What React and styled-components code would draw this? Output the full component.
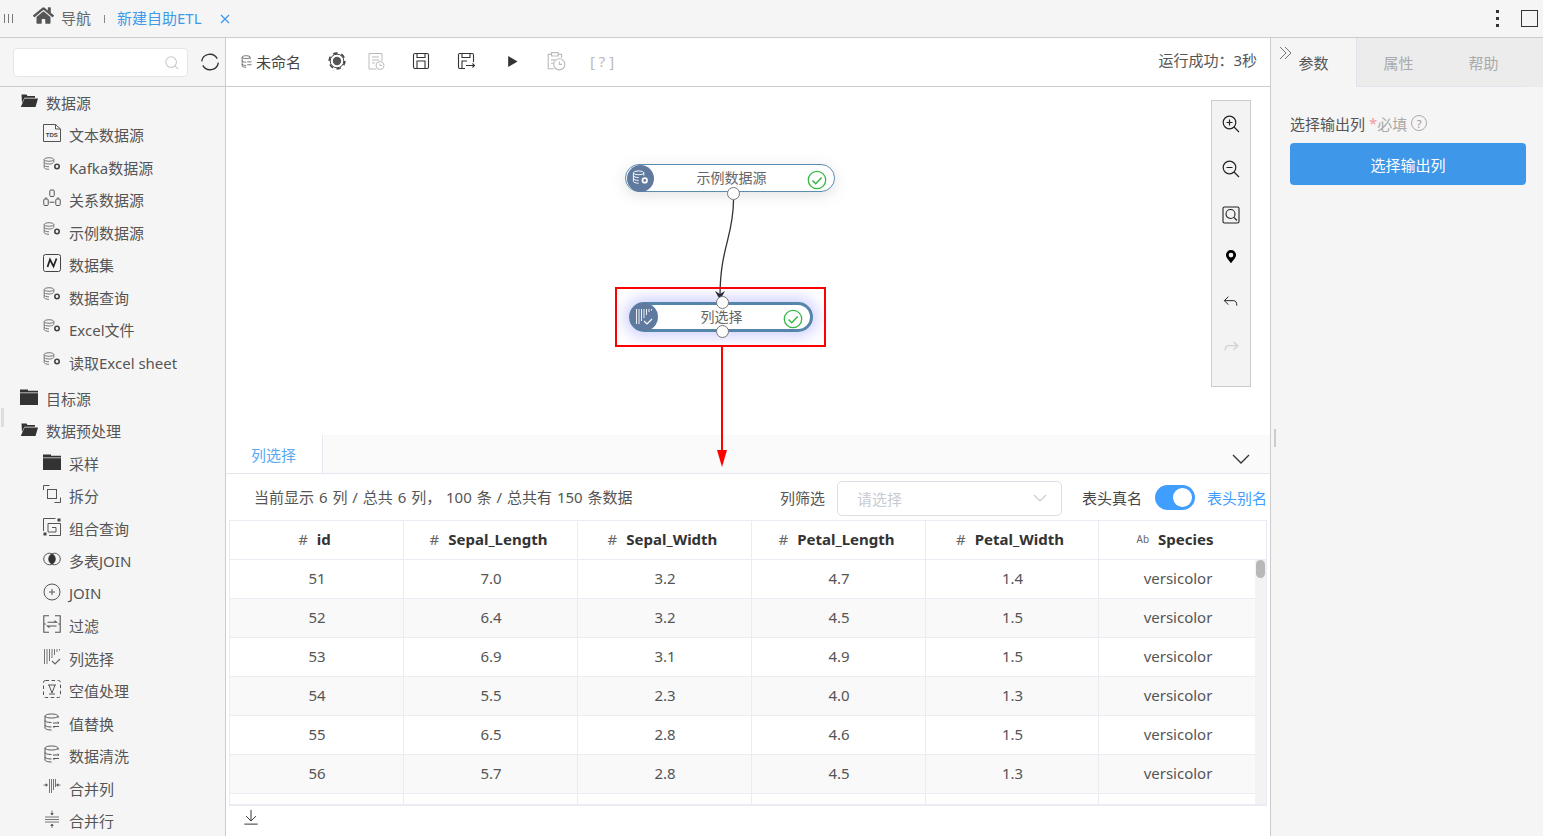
import React from "react";
import styled, { createGlobalStyle } from "styled-components";
import { FaHome } from "react-icons/fa";

const Svg = ({ size = 18, children, color = "#555", sw = 1, ...rest }) => (
  <svg width={size} height={size} viewBox="0 0 18 18" fill="none" stroke={color} strokeWidth={sw} {...rest}>
    {children}
  </svg>
);

const FolderOpen = () => (
  <Svg><path d="M1.5 2.500h5l1 1.500h7.500V5.800H4.500L2 11z" fill="#333" stroke="none" /><path d="M4.500 6.500H18L15.500 15H.8z" fill="#333" stroke="none" /></Svg>
);
const FolderShut = () => (
  <Svg><path d="M0 1.500h8v1.200h10v1.800H0z" fill="#333" stroke="none" /><path d="M0 5.200h18V17H0z" fill="#333" stroke="none" /></Svg>
);
const TdsFile = () => (
  <Svg>
    <path d="M.5.500h12l5 4.500v12.500H.5z M12.500.500v4.500h5" />
    <text x="8.800" y="12.500" fontSize="6" fontFamily="Liberation Sans" fontWeight="700" fill="#444" stroke="none" textAnchor="middle">TDS</text>
  </Svg>
);
const DbGear = () => (
  <Svg color="#777">
    <ellipse cx="6" cy="2.500" rx="4.800" ry="1.800" />
    <path d="M1.200 2.500v8c0 1 2 1.800 4.800 1.800 M1.200 5.200c0 1 2 1.800 4.800 1.800s3.500-.5 4.500-1.300 M1.200 8c0 1 2 1.800 4.800 1.800 M10.800 2.500v3" />
    <circle cx="14" cy="9.500" r="2.200" stroke="#444" strokeWidth="1.600" />
  </Svg>
);
const Relation = () => (
  <Svg color="#555">
    <rect x="6.800" y="1" width="4.400" height="6.500" rx="1" />
    <rect x=".8" y="10" width="4.400" height="6.500" rx="1" />
    <rect x="12.800" y="10" width="4.400" height="6.500" rx="1" />
    <path d="M3 10V8.200M15 10V8.200M6.500 13.200h5" />
  </Svg>
);
const DatasetN = () => (
  <Svg color="#444">
    <rect x=".5" y=".5" width="17" height="17" rx="2" />
    <path d="M4.500 13L7 5.500l3.500 7L13.500 4.500" stroke="#222" strokeWidth="1.700" />
  </Svg>
);
const Split = () => (
  <Svg>
    <path d="M.5 5V.5h6M17.500 12.500v5h-6" />
    <rect x="4.500" y="4.500" width="9" height="9" />
  </Svg>
);
const Combine = () => (
  <Svg>
    <path d="M.5 13V.5h12M5 5.500h12.500V17.500H6" />
    <path d="M5 5.500v8.500h8V9.500H9" />
    <rect x="14.500" y=".5" width="3" height="3" fill="#444" stroke="none" />
    <rect x=".5" y="14.500" width="3" height="3" fill="#444" stroke="none" />
  </Svg>
);
const Venn = () => (
  <Svg>
    <circle cx="6.500" cy="9" r="5.800" />
    <circle cx="11.500" cy="9" r="5.800" />
    <path d="M9 3.800a5.800 5.800 0 0 1 0 10.400a5.800 5.800 0 0 1 0-10.400z" fill="#333" stroke="none" />
  </Svg>
);
const JoinIcon = () => (
  <Svg>
    <circle cx="9" cy="9" r="8" />
    <path d="M9 6v6M6 9h6" />
  </Svg>
);
const FilterIcon = () => (
  <Svg sw={1.100}>
    <path d="M6 .8H.8v16.400H6M12 .8h5.200v16.400H12M.8 9h2M15.200 9h2" />
    <path d="M4.500 7.200h9l-2-1.500M13.500 11h-9l2 1.500" />
  </Svg>
);
const ColSelect = ({ color = "#666" }) => (
  <Svg color={color} sw={0.9}>
    <path d="M1.500 1v15M4 1v15M6.500 1v12M9 1v9M11.500 1v6M14 1v3M16.500 1v1.500" />
    <path d="M9 13l3 3 5-5" stroke={color} strokeWidth="1.200" />
  </Svg>
);
const NullIcon = () => (
  <Svg>
    <rect x=".5" y=".5" width="17" height="17" rx="2" strokeDasharray="3.500 2.500" />
    <path d="M5 5h8M6 5l3 8 3-8" />
    <path d="M6 14h6" />
  </Svg>
);
const DbSwap = () => (
  <Svg>
    <path d="M15 5V3c0-1-2.500-2-6.500-2S2 2 2 3v12c0 1 2.500 2 6.500 2M2 3c0 1 2.500 2 6.500 2S15 4 15 3M2 7.500c0 1 2.500 2 6.500 2M2 12c0 1 2.500 2 6.500 2" />
    <path d="M10 10h6l-1.500-1.200M16 13.500h-6l1.500 1.200" />
  </Svg>
);
const MergeCol = () => (
  <Svg color="#555" sw={0.8}>
    <path d="M6.500 1v14M8.500 1v14M10.500 1v11M12.500 1v8" />
    <path d="M.5 7h3M17.500 7h-3" />
    <path d="M3 5.800L4.500 7 3 8.200zM15 5.800L13.500 7 15 8.200z" fill="#444" />
  </Svg>
);
const MergeRow = () => (
  <Svg color="#555" sw={0.8}>
    <path d="M2 7h14M2 9.500h14M2 12h14" />
    <path d="M9 .5v4M9 14.500v3.500" />
    <path d="M7.800 3.500L9 5 10.200 3.500zM7.800 15.500L9 14 10.200 15.500z" fill="#444" />
  </Svg>
);

const sidebarGroups = [
  {
    name: "数据源", open: true,
    items: [
      ["文本数据源", TdsFile], ["Kafka数据源", DbGear], ["关系数据源", Relation], ["示例数据源", DbGear],
      ["数据集", DatasetN], ["数据查询", DbGear], ["Excel文件", DbGear], ["读取Excel sheet", DbGear],
    ],
  },
  { name: "目标源", open: false, items: [] },
  {
    name: "数据预处理", open: true,
    items: [
      ["采样", FolderShut], ["拆分", Split], ["组合查询", Combine], ["多表JOIN", Venn], ["JOIN", JoinIcon],
      ["过滤", FilterIcon], ["列选择", ColSelect], ["空值处理", NullIcon], ["值替换", DbSwap],
      ["数据清洗", DbSwap], ["合并列", MergeCol], ["合并行", MergeRow],
    ],
  },
];

const columns = [
  { tag: "#", name: "id" },
  { tag: "#", name: "Sepal_Length" },
  { tag: "#", name: "Sepal_Width" },
  { tag: "#", name: "Petal_Length" },
  { tag: "#", name: "Petal_Width" },
  { tag: "Ab", name: "Species" },
];

// the last row only shows its top edge above the fold
const rows = [
  ["51", "7.0", "3.2", "4.7", "1.4", "versicolor"],
  ["52", "6.4", "3.2", "4.5", "1.5", "versicolor"],
  ["53", "6.9", "3.1", "4.9", "1.5", "versicolor"],
  ["54", "5.5", "2.3", "4.0", "1.3", "versicolor"],
  ["55", "6.5", "2.8", "4.6", "1.5", "versicolor"],
  ["56", "5.7", "2.8", "4.5", "1.3", "versicolor"],
  ["", "", "", "", "", ""],
];

const CheckBadge = () => (
  <Badge width="20" height="20" viewBox="0 0 20 20">
    <circle cx="10" cy="10" r="8.700" />
    <path d="M5.500 10.500l3.200 3.200 6-6.200" strokeWidth="1.500" />
  </Badge>
);

export default function App() {
  return (
    <Page>
      <GlobalStyle />
      <TopBar>
        <Grip />
        <HomeLink><FaHome size={21} color="#555" /></HomeLink>
        <NavText>导航</NavText>
        <NavSep />
        <ActiveTab>新建自助ETL</ActiveTab>
        <CloseMark viewBox="0 0 10 10"><path d="M1 1l8 8M9 1l-8 8" /></CloseMark>
        <TopRight>
          <Dots><i /><i /><i /></Dots>
          <MaxBox />
        </TopRight>
      </TopBar>

      <Main>
        <Sidebar>
          <SearchRow>
            <SearchBox>
              <Svg size={16} color="#c4c8cc" sw={1.200}><circle cx="8" cy="8" r="6" /><path d="M12.500 12.500l3.500 3.500" /></Svg>
            </SearchBox>
            <Svg size={20} color="#333" sw={1.200}>
              <path d="M1.500 8.500a7.500 7.500 0 0 1 14-2.500M16.500 9.500a7.500 7.500 0 0 1-14 2.500" />
            </Svg>
          </SearchRow>
          <Tree>
            {sidebarGroups.map(group => (
              <React.Fragment key={group.name}>
                <GroupRow $closed={!group.open}>
                  <IconSlot>{group.open ? <FolderOpen /> : <FolderShut />}</IconSlot>
                  {group.name}
                </GroupRow>
                {group.items.map(([label, Icon]) => (
                  <ItemRow key={label}>
                    <IconSlot $up><Icon /></IconSlot>
                    {label}
                  </ItemRow>
                ))}
              </React.Fragment>
            ))}
          </Tree>
          <SideHandle />
        </Sidebar>

        <Center>
          <Toolbar>
            <FileName>
              <Svg size={13} color="#444"><path d="M14 6V3c0-1-2-2-5.500-2S3 2 3 3v12c0 1 2 2 5.500 2M3 3c0 1 2 2 5.500 2S14 4 14 3M3 8c0 1 2 2 5.500 2M3 12.500c0 1 2 2 5.500 2M10 9.500h6M16 13.500h-6" /></Svg>
              未命名
            </FileName>
            <ToolSlot $x={27}>
              <Svg color="#444">
                <circle cx="9" cy="9" r="7.900" strokeWidth="1.600" strokeDasharray="4.500 3.770" />
                <circle cx="9" cy="9" r="6.800" />
                <circle cx="9" cy="9" r="4.200" fill="#555" stroke="none" />
              </Svg>
            </ToolSlot>
            <ToolSlot $x={21}>
              <Svg color="#bbb"><path d="M9 17H2V1.500h13V9M5 5h7M5 8h7M5 11h3" /><circle cx="13" cy="13.500" r="4" /><path d="M13 11.500v2h2" /></Svg>
            </ToolSlot>
            <ToolSlot $x={27}>
              <Svg color="#333" sw={1.100}><rect x="1.500" y="1.500" width="15" height="15" rx="1.500" /><path d="M5 1.500v4h8v-4M5 16.500V9h8v7.500" /></Svg>
            </ToolSlot>
            <ToolSlot $x={27}>
              <Svg color="#333" sw={1.100}><path d="M16.500 10V3c0-1-.500-1.500-1.500-1.500H3c-1 0-1.500.500-1.500 1.500v12c0 1 .500 1.500 1.500 1.500h5M5 1.500v4h8v-4M5 16V9h5M9 13.500h8.500M15.500 11.500l2 2-2 2" /></Svg>
            </ToolSlot>
            <ToolSlot $x={31}>
              <Svg size={13} color="#333"><path d="M3 1.500v15L16 9z" fill="#333" stroke="none" /></Svg>
            </ToolSlot>
            <ToolSlot $x={27}>
              <Svg size={20} color="#bbb"><path d="M7 16H2V3h3M11 3h3v3M5 1.500h6v3H5zM4.500 8H8M4.500 11H7" /><circle cx="12" cy="12" r="5" /><path d="M12 9.500V12h2.500" /></Svg>
            </ToolSlot>
            <HelpTag>[ ? ]</HelpTag>
            <RunStatus>运行成功：3秒</RunStatus>
          </Toolbar>

          <Canvas>
            <EdgeLayer>
              <path d="M 107.500 113 C 107.500 150, 94 160, 94 210" />
            </EdgeLayer>
            <SourceNode>
              <NodeIcon><Svg size={17} color="#fff"><ellipse cx="7" cy="3" rx="5.500" ry="2" /><path d="M1.500 3v9c0 1 2.500 2 5.500 2M1.500 6c0 1 2.500 2 5.500 2M1.500 9c0 1 2.500 2 5.500 2M12.500 3v3" /><circle cx="13.500" cy="11" r="2.400" strokeWidth="1.800" /></Svg></NodeIcon>
              <NodeLabel>示例数据源</NodeLabel>
              <CheckBadge />
              <Port $side="bottom" $dx={101} />
            </SourceNode>
            <ArrowHead viewBox="0 0 10 10"><path d="M0 1l5 3 5-3-5 9z" /></ArrowHead>
            <SelectionBox />
            <SelectedNode>
              <NodeIcon $big><ColSelect color="#fff" /></NodeIcon>
              <NodeLabel>列选择</NodeLabel>
              <CheckBadge />
              <Port $side="top" $dx={84} />
              <Port $side="bottom" $dx={84} />
            </SelectedNode>
            <RedArrow width="14" height="122" viewBox="0 0 14 122">
              <path d="M7 0v110" stroke="#f00" strokeWidth="2" fill="none" />
              <path d="M2 103h10l-5 17z" fill="#f00" />
            </RedArrow>
            <ZoomPane>
              <ZoomTool $h={46}>
                <Svg color="#222" sw={1.200}><circle cx="7.500" cy="7.500" r="6.300" /><path d="M12 12l5 5M7.500 4.500v6M4.500 7.500h6" /></Svg>
              </ZoomTool>
              <ZoomTool $h={44}>
                <Svg color="#222" sw={1.200}><circle cx="7.500" cy="7.500" r="6.300" /><path d="M12 12l5 5M4.500 7.500h6" /></Svg>
              </ZoomTool>
              <ZoomTool $h={48}>
                <Svg color="#222" sw={1.100}><rect x="1" y="1" width="16" height="16" rx="1.500" /><circle cx="8.500" cy="8" r="4.500" /><path d="M12 11.500l3 3" /></Svg>
              </ZoomTool>
              <ZoomTool $h={36}>
                <Svg size={14} color="#000"><path d="M9 17C5 12 2.500 9.500 2.500 6.500a6.500 6.500 0 0 1 13 0C15.500 9.500 13 12 9 17z" fill="#000" stroke="none" /><circle cx="9" cy="6.500" r="3" fill="#f3f3f3" stroke="none" /></Svg>
              </ZoomTool>
              <ZoomTool $h={54}>
                <Svg size={16} color="#222" sw={1.100}><path d="M6 3L1.500 7.500 6 12M1.500 7.500H12c2.500 0 3.500 2 3.500 5.500" /></Svg>
              </ZoomTool>
              <ZoomTool $h={36}>
                <Svg size={16} color="#cfd2d8" sw={1.500}><path d="M12 3l4.500 4.500L12 12M16.500 7.500H6c-2.500 0-3.500 2-3.500 5.500" /></Svg>
              </ZoomTool>
            </ZoomPane>
          </Canvas>

          <DataPanel>
            <TabBar>
              <DataTab>列选择</DataTab>
              <Chevron width="20" height="12" viewBox="0 0 20 12"><path d="M2 2l8 8 8-8" /></Chevron>
            </TabBar>
            <InfoRow>
              <InfoText>当前显示 6 列 / 总共 6 列， 100 条 / 总共有 150 条数据</InfoText>
              <FilterLabel>列筛选</FilterLabel>
              <SelectBox>
                请选择
                <svg width="14" height="8" viewBox="0 0 14 8" fill="none" stroke="#c8ccd2" strokeWidth="1.200"><path d="M1 1l6 6 6-6" /></svg>
              </SelectBox>
              <ToggleLabel>表头真名</ToggleLabel>
              <Toggle><Knob /></Toggle>
              <AliasLabel>表头别名</AliasLabel>
            </InfoRow>
            <TableWrap>
              <HeadRow>
                {columns.map(col => (
                  <HeadCell key={col.name}>
                    <ColTag $small={col.tag === "Ab"}>{col.tag}</ColTag>
                    {col.name}
                  </HeadCell>
                ))}
              </HeadRow>
              <BodyWrap>
                <Rows>
                  {rows.map((row, index) => (
                    <BodyRow key={index} $shade={index % 2 === 1}>
                      {row.map((cell, i) => <BodyCell key={i}>{cell}</BodyCell>)}
                    </BodyRow>
                  ))}
                </Rows>
                <ScrollTrack><ScrollThumb /></ScrollTrack>
              </BodyWrap>
            </TableWrap>
            <BottomBar>
              <Svg size={16} color="#333" sw={1.100}><path d="M9 1v12M3.500 8L9 13.500 14.500 8M1.500 17h15" /></Svg>
            </BottomBar>
          </DataPanel>
        </Center>

        <RightPanel>
          <PaneHandle />
          <CollapseMark width="14" height="14" viewBox="0 0 14 14"><path d="M1 1l6 6-6 6M6 1l6 6-6 6" /></CollapseMark>
          <RightTabs>
            <RightTab $active>参数</RightTab>
            <RightTab>属性</RightTab>
            <RightTab>帮助</RightTab>
          </RightTabs>
          <RightBody>
            <FieldLabel>
              选择输出列 <Required>*</Required><Hint>必填</Hint>
              <HelpCircle>?</HelpCircle>
            </FieldLabel>
            <PrimaryButton>选择输出列</PrimaryButton>
          </RightBody>
        </RightPanel>
      </Main>
    </Page>
  );
}

const GlobalStyle = createGlobalStyle`
  html, body { margin: 0; padding: 0; height: 100%; overflow: hidden; }
  body { font-family: "Noto Sans", "Noto Sans CJK SC", sans-serif; font-size: 15px; color: #555; }
  * { box-sizing: border-box; }
`;

const Page = styled.div`
  height: 100vh;
  display: flex;
  flex-direction: column;
  background: #fff;
`;

const TopBar = styled.div`
  height: 38px;
  flex: none;
  display: flex;
  align-items: center;
  padding-left: 4px;
  background: #f5f5f5;
  border-bottom: 1px solid #ccc;
`;

const Grip = styled.div`
  width: 10px;
  height: 9px;
  margin-right: 19px;
  background: repeating-linear-gradient(90deg, #777 0 1px, transparent 1px 4px);
`;

const HomeLink = styled.span`
  display: flex;
  margin: -6px 7px 0 0;
`;

const NavText = styled.span`
  margin-top: -3px;
  color: #666;
`;

const NavSep = styled.span`
  width: 1px;
  height: 8px;
  margin: 0 13px;
  background: #888;
`;

const ActiveTab = styled.span`
  margin: -3px 0 0 -1px;
  color: #3d9be9;
`;

const CloseMark = styled.svg`
  width: 10px;
  height: 10px;
  margin-left: 18px;
  fill: none;
  stroke: #3d9be9;
  stroke-width: 1.300;
`;

const TopRight = styled.div`
  margin-left: auto;
  display: flex;
  align-items: center;
  padding-right: 5px;
`;

const Dots = styled.span`
  display: flex;
  flex-direction: column;
  gap: 4px;
  margin-right: 22px;
  i {
    width: 3px;
    height: 3px;
    background: #333;
  }
`;

const MaxBox = styled.span`
  width: 17px;
  height: 17px;
  border: 1px solid #333;
`;

const Main = styled.div`
  flex: 1;
  min-height: 0;
  display: flex;
`;

const Sidebar = styled.aside`
  width: 226px;
  flex: none;
  position: relative;
  background: #f5f5f5;
  border-right: 1px solid #ccc;
  overflow: hidden;
`;

const SearchRow = styled.div`
  height: 49px;
  display: flex;
  align-items: center;
  gap: 12px;
  padding-left: 13px;
  border-bottom: 1px solid #ccc;
`;

const SearchBox = styled.div`
  width: 175px;
  height: 29px;
  margin-top: 1px;
  display: flex;
  align-items: center;
  justify-content: flex-end;
  padding-right: 7px;
  background: #fff;
  border: 1px solid #e4e6ec;
  border-radius: 4px;
`;

const Tree = styled.div`
  margin-top: -1px;
  display: flex;
  flex-direction: column;
`;

const GroupRow = styled.div`
  height: 32.500px;
  flex: none;
  display: flex;
  align-items: center;
  gap: 8px;
  padding-left: 20px;
  margin-top: ${p => (p.$closed ? "3.500px" : "0")};
  color: #555;
`;

const ItemRow = styled(GroupRow)`
  padding-left: 43px;
`;

const IconSlot = styled.span`
  display: flex;
  width: 18px;
  height: 18px;
  margin-top: ${p => (p.$up ? "-3px" : "-2px")};
`;

const SideHandle = styled.div`
  position: absolute;
  left: 1px;
  top: 370px;
  width: 3px;
  height: 19px;
  background: #ddd;
`;

const Center = styled.main`
  flex: 1;
  min-width: 0;
  display: flex;
  flex-direction: column;
`;

const Toolbar = styled.div`
  height: 49px;
  flex: none;
  display: flex;
  align-items: center;
  padding: 0 13px 2px 14px;
  border-bottom: 1px solid #ccc;
`;

const FileName = styled.span`
  display: flex;
  align-items: center;
  gap: 3px;
  color: #444;
`;

const ToolSlot = styled.span`
  display: flex;
  margin-left: ${p => p.$x}px;
`;

const HelpTag = styled.span`
  margin-left: 24px;
  color: #bbb;
`;

const RunStatus = styled.span`
  margin: -3px 0 0 auto;
  color: #555;
`;

const Canvas = styled.div`
  height: 348px;
  flex: none;
  position: relative;
  z-index: 2;
  background: #fff;
`;

const EdgeLayer = styled.svg`
  position: absolute;
  left: 400px;
  top: 0;
  width: 300px;
  height: 220px;
  fill: none;
  stroke: #333;
  stroke-width: 1.300;
`;

const NodeBase = styled.div`
  position: absolute;
  display: flex;
  align-items: center;
  background: #fff;
  border-radius: 15px;
`;

const SourceNode = styled(NodeBase)`
  left: 399px;
  top: 77px;
  width: 210px;
  height: 28px;
  padding: 0 7px 0 1px;
  border: 1px solid #5b8db0;
  box-shadow: 0 3px 14px rgba(120, 120, 130, 0.220);
`;

const SelectedNode = styled(NodeBase)`
  left: 403px;
  top: 215px;
  width: 184px;
  height: 30px;
  padding: 0 7px 0 0;
  border: 3px solid #5585a8;
  box-shadow: 0 0 14px 5px rgba(110, 110, 255, 0.300);
`;

const NodeIcon = styled.span`
  width: ${p => (p.$big ? 28 : 27)}px;
  height: ${p => (p.$big ? 28 : 27)}px;
  flex: none;
  margin-left: ${p => (p.$big ? "-2px" : "0")};
  display: flex;
  align-items: center;
  justify-content: center;
  border-radius: 50%;
  background: #5f7a9e;
`;

const NodeLabel = styled.span`
  flex: 1;
  margin: -3px 0 0 2px;
  text-align: center;
  font-size: 14px;
  color: #666;
`;

const Badge = styled.svg`
  flex: none;
  margin-top: 3px;
  fill: none;
  stroke: #35b844;
  stroke-width: 1.300;
`;

const Port = styled.span`
  position: absolute;
  left: ${p => p.$dx}px;
  ${p => (p.$side === "top" ? "top: -9px;" : "bottom: -9px;")}
  width: 13px;
  height: 13px;
  border-radius: 50%;
  background: #fff;
  border: 1px solid #777;
`;

const ArrowHead = styled.svg`
  position: absolute;
  left: 489px;
  top: 203px;
  width: 10px;
  height: 10px;
  fill: #222;
`;

const SelectionBox = styled.div`
  position: absolute;
  left: 389px;
  top: 200px;
  width: 211px;
  height: 60px;
  border: 2px solid #f00;
`;

const RedArrow = styled.svg`
  position: absolute;
  left: 489px;
  top: 260px;
`;

const ZoomPane = styled.div`
  position: absolute;
  right: 19px;
  top: 13px;
  width: 40px;
  height: 287px;
  display: flex;
  flex-direction: column;
  background: #f3f3f3;
  border: 1px solid #ccc;
`;

const ZoomTool = styled.span`
  height: ${p => p.$h}px;
  flex: none;
  display: flex;
  align-items: center;
  justify-content: center;
`;

const DataPanel = styled.section`
  flex: 1;
  min-height: 0;
  display: flex;
  flex-direction: column;
  background: #fff;
`;

const TabBar = styled.div`
  height: 39px;
  flex: none;
  display: flex;
  align-items: stretch;
  justify-content: space-between;
  padding-right: 19px;
  background: #fafafa;
  border-bottom: 1px solid #e6e6ee;
`;

const DataTab = styled.div`
  width: 97px;
  padding: 9px 0 0 25px;
  color: #5aa9f5;
  background: #fff;
  border-right: 1px solid #e6e6ee;
`;

const Chevron = styled.svg`
  align-self: center;
  margin-top: 9px;
  fill: none;
  stroke: #333;
  stroke-width: 1.300;
`;

const InfoRow = styled.div`
  height: 46px;
  flex: none;
  display: flex;
  align-items: center;
  padding: 0 0 0 28px;
  color: #555;
`;

const InfoText = styled.span`
  flex: none;
  margin-top: -2px;
  width: 526px;
  white-space: nowrap;
  word-spacing: 1px;
`;

const FilterLabel = styled.span`
  margin-right: 12px;
`;

const SelectBox = styled.div`
  width: 225px;
  height: 35px;
  flex: none;
  margin-top: 2px;
  display: flex;
  align-items: center;
  justify-content: space-between;
  padding: 0 14px 0 19px;
  color: #c8ccd2;
  border: 1px solid #dcdfe6;
  border-radius: 5px;
`;

const ToggleLabel = styled.span`
  margin: 0 13px 0 20px;
  color: #444;
`;

const Toggle = styled.span`
  width: 40px;
  height: 25px;
  flex: none;
  display: flex;
  align-items: center;
  justify-content: flex-end;
  padding-right: 3px;
  border-radius: 13px;
  background: #409eff;
`;

const Knob = styled.i`
  width: 19px;
  height: 19px;
  border-radius: 50%;
  background: #fff;
`;

const AliasLabel = styled.span`
  margin-left: 12px;
  color: #409eff;
  white-space: nowrap;
`;

const TableWrap = styled.div`
  flex: none;
  height: 286px;
  margin: 0 3px;
  display: flex;
  flex-direction: column;
  overflow: hidden;
  border: 1px solid #ebebf3;
  border-width: 1px 1px 2px;
`;

const gridCols = "174px 174px 174px 174px 173px";

const HeadRow = styled.div`
  height: 39px;
  flex: none;
  display: grid;
  grid-template-columns: ${gridCols} 1fr;
  border-bottom: 1px solid #ebebf3;
`;

const HeadCell = styled.div`
  display: flex;
  align-items: center;
  justify-content: center;
  gap: 9px;
  padding: 0 4px 2px 0;
  font-weight: 700;
  color: #333;
  border-right: 1px solid #ebebf3;
  &:last-child {
    border-right: 0;
    padding-right: 15px;
  }
`;

const ColTag = styled.span`
  font-weight: 400;
  font-size: ${p => (p.$small ? "10px" : "15px")};
  color: #666;
`;

const BodyWrap = styled.div`
  flex: 1;
  min-height: 0;
  display: flex;
`;

const Rows = styled.div`
  flex: 1;
  min-width: 0;
`;

const BodyRow = styled.div`
  height: 39px;
  display: grid;
  grid-template-columns: ${gridCols} 1fr;
  background: ${p => (p.$shade ? "#f9f9fa" : "#fff")};
  border-bottom: 1px solid #ebebf3;
`;

const BodyCell = styled.div`
  display: flex;
  align-items: center;
  justify-content: center;
  padding: 0 0 2px 1px;
  color: #555;
  border-right: 1px solid #ebebf3;
  &:last-child {
    border-right: 0;
    padding-left: 2px;
  }
`;

const ScrollTrack = styled.div`
  width: 11px;
  flex: none;
  padding: 0 1px;
  background: #f3f3f3;
`;

const ScrollThumb = styled.div`
  height: 18px;
  border-radius: 5px;
  background: #b8b8b8;
`;

const BottomBar = styled.div`
  flex: 1;
  display: flex;
  padding: 3px 0 0 17px;
`;

const RightPanel = styled.aside`
  width: 273px;
  flex: none;
  position: relative;
  display: flex;
  flex-direction: column;
  background: #f5f5f5;
  border-left: 1px solid #ccc;
`;

const PaneHandle = styled.div`
  position: absolute;
  left: 3px;
  top: 391px;
  width: 2px;
  height: 18px;
  background: #ccc;
`;

const CollapseMark = styled.svg`
  position: absolute;
  left: 8px;
  top: 8px;
  fill: none;
  stroke: #777;
  stroke-width: 1;
`;

const RightTabs = styled.div`
  height: 49px;
  flex: none;
  display: flex;
  background: #ececec;
`;

const RightTab = styled.div`
  width: ${p => (p.$active ? 86 : 85)}px;
  padding-top: 14px;
  text-align: center;
  color: ${p => (p.$active ? "#555" : "#aaa")};
  background: ${p => (p.$active ? "#f5f5f5" : "transparent")};
  border-right: ${p => (p.$active ? "1px solid #e2e2ea" : "0")};
  border-bottom: ${p => (p.$active ? "0" : "1px solid #e4e4ec")};
  &:nth-child(2) {
    margin-left: -1px;
  }
`;

const RightBody = styled.div`
  padding: 21px 17px 0 19px;
`;

const FieldLabel = styled.div`
  height: 30px;
  display: flex;
  align-items: center;
  white-space: pre;
  color: #555;
`;

const Required = styled.span`
  color: #f39a9a;
`;

const Hint = styled.span`
  color: #aaa;
`;

const HelpCircle = styled.span`
  width: 16px;
  height: 16px;
  margin-left: 4px;
  display: flex;
  align-items: center;
  justify-content: center;
  font-size: 11px;
  color: #999;
  border: 1.500px solid #aaa;
  border-radius: 50%;
`;

const PrimaryButton = styled.button`
  width: 236px;
  height: 42px;
  display: block;
  margin-top: 5px;
  font: inherit;
  color: #fff;
  background: #3e97e8;
  border: 0;
  border-radius: 4px;
`;
